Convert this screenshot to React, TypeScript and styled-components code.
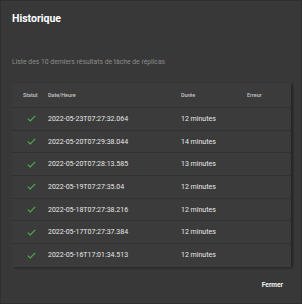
import React from "react";
import styled, { createGlobalStyle } from "styled-components";

const Global = createGlobalStyle`
  html, body { margin: 0; padding: 0; background: #2f2f2f; }
  * { box-sizing: border-box; }
`;

const Dialog = styled.div`
  width: 302px;
  height: 304px;
  background: #383838;
  border: 1px solid #2e2e2e;
  font-family: Roboto, "Liberation Sans", sans-serif;
  display: flex;
  flex-direction: column;
  padding: 0 11px 0 11px;
`;

const Title = styled.h2`
  margin: 0;
  padding-top: 11px;
  font-size: 10.5px;
  line-height: 14px;
  font-weight: 700;
  color: #ffffff;
`;

const Subtitle = styled.p`
  margin: 0;
  margin-top: 31px;
  font-size: 6.8px;
  line-height: 10px;
  color: #8b8b8b;
`;

const TablePaper = styled.div`
  margin-top: 16px;
  background: #3b3b3b;
  box-shadow: 2px 1px 2px rgba(0, 0, 0, 0.35);
  width: 279px;
`;

const Row = styled.div<{ $header?: boolean }>`
  display: grid;
  grid-template-columns: 25px 133px 66px 1fr;
  align-items: center;
  padding-left: 11px;
  height: ${(p) => (p.$header ? "25px" : "22.7px")};
  border-bottom: 1px solid #323232;
  &:last-child { border-bottom: none; }
`;

const HeadCell = styled.div`
  font-size: 5.4px;
  font-weight: 500;
  color: #c4c4c4;
`;

const Cell = styled.div`
  font-size: 7px;
  color: #e8e8e8;
  white-space: nowrap;
`;

const StatusCell = styled.div`
  width: 16px;
  display: flex;
  justify-content: center;
  align-items: center;
`;

const Footer = styled.div`
  flex: 1;
  display: flex;
  justify-content: flex-end;
  align-items: center;
  padding-right: 7px;
`;

const Button = styled.button`
  background: none;
  border: none;
  padding: 0;
  font-family: inherit;
  font-size: 6.6px;
  font-weight: 700;
  color: #f2f2f2;
`;

const Check = () => (
  <svg width="9" height="7" viewBox="0 0 9 7">
    <path d="M0.8 3.6 L3.2 6 L8.2 0.8" fill="none" stroke="#4caf50" strokeWidth="1.1" />
  </svg>
);

const rows = [
  ["2022-05-23T07:27:32.064", "12 minutes"],
  ["2022-05-20T07:29:38.044", "14 minutes"],
  ["2022-05-20T07:28:13.585", "13 minutes"],
  ["2022-05-19T07:27:35.04", "12 minutes"],
  ["2022-05-18T07:27:38.216", "12 minutes"],
  ["2022-05-17T07:27:37.384", "12 minutes"],
  ["2022-05-16T17:01:34.513", "12 minutes"],
];

export default function App() {
  return (
    <>
      <Global />
      <Dialog>
        <Title>Historique</Title>
        <Subtitle>Liste des 10 derniers résultats de tâche de réplicas</Subtitle>
        <TablePaper>
          <Row $header>
            <HeadCell>Statut</HeadCell>
            <HeadCell>Date/Heure</HeadCell>
            <HeadCell>Durée</HeadCell>
            <HeadCell>Erreur</HeadCell>
          </Row>
          {rows.map(([d, dur]) => (
            <Row key={d}>
              <StatusCell><Check /></StatusCell>
              <Cell>{d}</Cell>
              <Cell>{dur}</Cell>
              <Cell />
            </Row>
          ))}
        </TablePaper>
        <Footer>
          <Button>Fermer</Button>
        </Footer>
      </Dialog>
    </>
  );
}
